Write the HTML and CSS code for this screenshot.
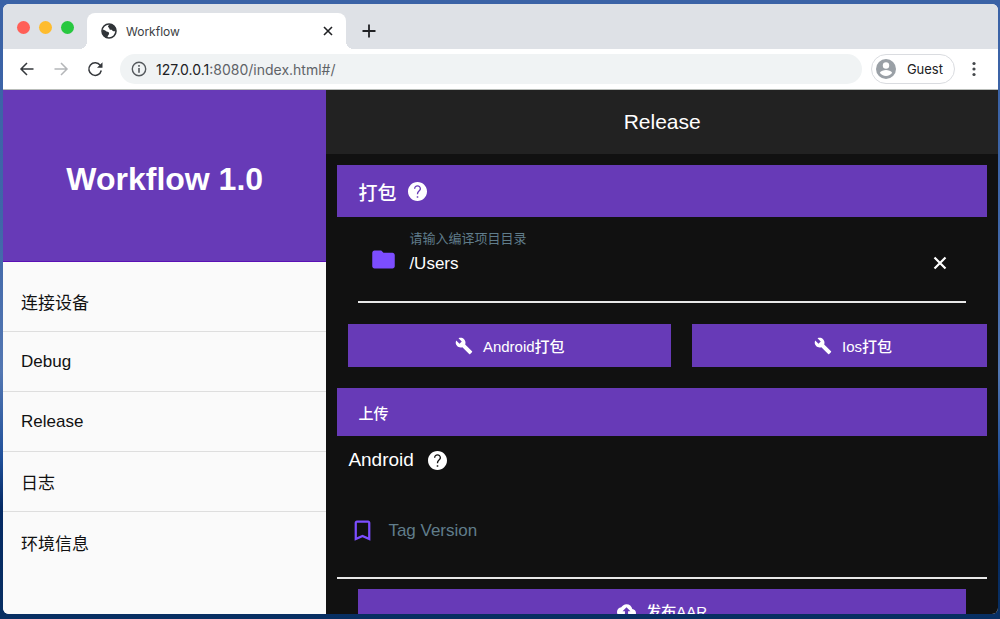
FILE: index.html
```html
<!DOCTYPE html>
<html lang="zh-CN">
<head>
<meta charset="utf-8">
<title>Workflow</title>
<link rel="stylesheet" href="styles.css">
</head>
<body>
<div class="window">
  <header class="tab-strip">
    <div class="lights">
      <button class="light light-close" aria-label="Close window"></button>
      <button class="light light-min" aria-label="Minimize window"></button>
      <button class="light light-max" aria-label="Zoom window"></button>
    </div>
    <div class="tab">
      <svg class="tab-icon" viewBox="0 0 16 16" aria-hidden="true">
        <circle cx="8" cy="8" r="7" fill="#fff" stroke="#303438" stroke-width="1.6"/>
        <path d="M1.500 6.500C3 7 4.500 7 5.500 8.500c1.500.2 2.500.5 2.600 2 .1 1.200-1.300 1.500-1.600 3.500L6 15C2.500 14 .6 11 1.500 6.500zM9 1c-.5 1.200-2 1-2 2.500 0 1 1.300.8 1.300 2 0 1.300 1.200 1.500 2.200 1.200.8 0 .8 1.500 2 1.600 1 .1 2-.3 2.500-.6C15 4 12.500 1.500 9 1z" fill="#303438"/>
      </svg>
      <span class="tab-title">Workflow</span>
      <button class="icon-button" aria-label="Close tab">
        <svg width="10" height="10" viewBox="0 0 10 10" stroke="#202124" stroke-width="1.6"><path d="M1 1l8 8M9 1l-8 8"/></svg>
      </button>
    </div>
    <button class="icon-button new-tab" aria-label="New tab">
      <svg width="14" height="14" viewBox="0 0 14 14" stroke="#202124" stroke-width="1.8"><path d="M7 .5v13M.5 7h13"/></svg>
    </button>
  </header>

  <div class="toolbar">
    <div class="nav-buttons">
      <button class="icon-button" aria-label="Back">
        <svg width="16" height="16" viewBox="0 0 16 16" fill="none" stroke="#35383c" stroke-width="1.5"><path d="M14.500 8H2M8 2L2 8l6 6"/></svg>
      </button>
      <button class="icon-button" aria-label="Forward">
        <svg width="16" height="16" viewBox="0 0 16 16" fill="none" stroke="#b4b6b9" stroke-width="1.5"><path d="M1.500 8H14M8 2l6 6-6 6"/></svg>
      </button>
      <button class="icon-button" aria-label="Reload">
        <svg width="16" height="16" viewBox="0 0 16 16" fill="none" stroke="#35383c" stroke-width="1.5"><path d="M14.300 9.500A6.300 6.300 0 1 1 13.300 4.400L14.500 6"/><path d="M15.500 1.200v5.500H10z" fill="#35383c" stroke="none"/></svg>
      </button>
    </div>
    <div class="address">
      <svg width="16" height="16" viewBox="0 0 16 16" fill="none" stroke="#55595d" stroke-width="1.400"><circle cx="8" cy="8" r="6.700"/><path d="M8 7v4.700M8 4v1.700" stroke-width="1.600"/></svg>
      <span class="url"><b class="host">127.0.0.1</b>:8080/index.html#/</span>
    </div>
    <button class="profile">
      <svg width="20" height="20" viewBox="0 0 20 20" aria-hidden="true"><circle cx="10" cy="10" r="10" fill="#9aa0a6"/><circle cx="10" cy="6.500" r="3.200" fill="#fff"/><path d="M3.800 13.800c1-2 4-2.800 6.200-2.800s5.200.8 6.200 2.800c-1.300 2-3.600 3.200-6.200 3.200s-4.900-1.200-6.200-3.200z" fill="#fff"/></svg>
      <span>Guest</span>
    </button>
    <button class="icon-button" aria-label="Menu">
      <svg width="16" height="16" viewBox="0 0 16 16" fill="#44474b"><circle cx="8" cy="2.500" r="1.600"/><circle cx="8" cy="8" r="1.600"/><circle cx="8" cy="13.500" r="1.600"/></svg>
    </button>
  </div>

  <div class="app">
    <aside class="sidebar">
      <h1 class="brand">Workflow 1.0</h1>
      <nav class="menu">
        <a class="menu-item" href="#devices">连接设备</a>
        <a class="menu-item" href="#debug">Debug</a>
        <a class="menu-item" href="#release">Release</a>
        <a class="menu-item" href="#log">日志</a>
        <a class="menu-item" href="#env">环境信息</a>
      </nav>
    </aside>

    <main class="main">
      <h2 class="app-bar">Release</h2>
      <div class="content">
        <h3 class="banner banner-large">打包
          <button class="icon-button" aria-label="打包帮助"><svg class="help" viewBox="2 2 20 20" fill="#fff"><path d="M12 2C6.480 2 2 6.480 2 12s4.480 10 10 10 10-4.480 10-10S17.520 2 12 2zm.8 16.600h-1.600v-1.700h1.600v1.700zm1.900-7.300l-.9.920C13.100 13 12.700 13.700 12.700 15h-1.400v-.5c0-1.100.4-2.100 1.100-2.830l1.240-1.260c.4-.4.66-.86.66-1.500 0-1.250-1-2.200-2.300-2.200s-2.300.95-2.300 2.300H8.300c0-2.100 1.650-3.700 3.700-3.700s3.700 1.600 3.700 3.700c0 .88-.4 1.680-1 2.290z"/></svg></button>
        </h3>

        <div class="field path-field">
          <svg width="27" height="27" viewBox="0 0 24 24" fill="#7c4dff" aria-hidden="true"><path d="M10 4H4c-1.100 0-1.990.9-1.990 2L2 18c0 1.100.9 2 2 2h16c1.100 0 2-.9 2-2V8c0-1.100-.9-2-2-2h-8l-2-2z"/></svg>
          <div class="field-body">
            <label class="field-label" for="path">请输入编译项目目录</label>
            <input class="field-input" id="path" type="text" value="/Users">
          </div>
          <button class="icon-button clear" aria-label="清除">
            <svg width="14" height="14" viewBox="0 0 14 14" stroke="#fff" stroke-width="2.200"><path d="M1.500 1.500l11 11M12.500 1.500l-11 11"/></svg>
          </button>
        </div>

        <div class="actions">
          <button class="action action-android">
            <svg width="18" height="18" viewBox="0 0 24 24" fill="#fff"><path d="M22.700 19l-9.100-9.100c.9-2.300.4-5-1.500-6.900-2-2-5-2.400-7.400-1.300L9 6 6 9 1.600 4.700C.4 7.100.9 10.100 2.900 12.100c1.900 1.900 4.600 2.400 6.900 1.500l9.100 9.100c.4.4 1 .4 1.400 0l2.300-2.300c.5-.4.5-1.100.1-1.400z"/></svg>
            <span>Android打包</span>
          </button>
          <button class="action action-ios">
            <svg width="18" height="18" viewBox="0 0 24 24" fill="#fff"><path d="M22.700 19l-9.100-9.100c.9-2.300.4-5-1.500-6.900-2-2-5-2.400-7.400-1.300L9 6 6 9 1.600 4.700C.4 7.100.9 10.100 2.900 12.100c1.900 1.900 4.600 2.400 6.900 1.500l9.100 9.100c.4.4 1 .4 1.400 0l2.300-2.300c.5-.4.5-1.100.1-1.400z"/></svg>
            <span>Ios打包</span>
          </button>
        </div>

        <h3 class="banner">上传</h3>
        <h4 class="platform">Android
          <button class="icon-button" aria-label="Android帮助"><svg class="help" viewBox="2 2 20 20" fill="#fff"><path d="M12 2C6.480 2 2 6.480 2 12s4.480 10 10 10 10-4.480 10-10S17.520 2 12 2zm.8 16.600h-1.600v-1.700h1.600v1.700zm1.900-7.300l-.9.920C13.100 13 12.700 13.700 12.700 15h-1.400v-.5c0-1.100.4-2.100 1.100-2.830l1.240-1.260c.4-.4.66-.86.66-1.500 0-1.250-1-2.200-2.300-2.200s-2.300.95-2.300 2.300H8.300c0-2.100 1.650-3.700 3.700-3.700s3.700 1.600 3.700 3.700c0 .88-.4 1.680-1 2.290z"/></svg></button>
        </h4>

        <div class="field tag-field">
          <svg width="27" height="27" viewBox="0 0 24 24" fill="#7c4dff" aria-hidden="true"><path d="M17 3H7c-1.100 0-1.990.9-1.990 2L5 21l7-3 7 3V5c0-1.100-.9-2-2-2zm0 15l-5-2.180L7 18V5h10v13z"/></svg>
          <input class="field-input" type="text" placeholder="Tag Version" aria-label="Tag Version">
        </div>

        <button class="action publish">
          <svg width="19" height="19" viewBox="0 0 24 24" fill="#fff"><path d="M19.350 10.040C18.670 6.590 15.640 4 12 4 9.110 4 6.600 5.640 5.350 8.040 2.340 8.360 0 10.910 0 14c0 3.310 2.690 6 6 6h13c2.760 0 5-2.240 5-5 0-2.640-2.050-4.780-4.650-4.960zM14 13v4h-4v-4H7l5-5 5 5h-3z"/></svg>
          <span>发布AAR</span>
        </button>
      </div>
    </main>
  </div>
</div>
</body>
</html>
```
FILE: styles.css
```css
* {
  box-sizing: border-box;
}

body {
  margin: 0;
  height: 100vh;
  padding: 4px 2px 5px 3px;
  overflow: hidden;
  font-family: "Liberation Sans", "Noto Sans CJK SC", sans-serif;
  background: linear-gradient(#3a62a6 0%, #3f66a8 35%, #5377b2 60%, #20509a 74%, #052a64 82%, #082f62 100%);
}

button,
input {
  font: inherit;
  color: inherit;
  border: 0;
  padding: 0;
  background: none;
}

svg {
  display: block;
  flex: none;
}

h1, h2, h3, h4 {
  margin: 0;
  font-weight: 400;
}

.window {
  height: 100%;
  display: flex;
  flex-direction: column;
  border-radius: 6px;
  overflow: hidden;
  background: #fff;
}

.icon-button {
  display: flex;
  flex: none;
}

/* Browser chrome */
.tab-strip {
  flex: none;
  display: flex;
  height: 45px;
  padding-top: 9px;
  background: #dee1e6;
  font-family: Inter, "Liberation Sans", sans-serif;
}

.lights {
  display: flex;
  gap: 9px;
  padding: 8px 13px 0 14px;
}

.light {
  width: 13px;
  height: 13px;
  border-radius: 50%;
}

.light-close { background: #ff5f57; }
.light-min { background: #febc2e; }
.light-max { background: #28c840; }

.tab {
  position: relative;
  display: flex;
  align-items: center;
  width: 259px;
  padding: 0 13px 0 14px;
  border-radius: 8px 8px 0 0;
  background: #fff;
}

.tab::before,
.tab::after {
  content: "";
  position: absolute;
  bottom: 0;
  width: 8px;
  height: 8px;
}

.tab::before {
  right: 100%;
  background: radial-gradient(circle at 0 0, transparent 8px, #fff 8px);
}

.tab::after {
  left: 100%;
  background: radial-gradient(circle at 100% 0, transparent 8px, #fff 8px);
}

.tab-icon {
  width: 16px;
  height: 16px;
}

.tab-title {
  flex: 1;
  padding-left: 9px;
  font-size: 12px;
  color: #3c4043;
}

.new-tab {
  align-self: center;
  margin-left: 16px;
}

.toolbar {
  flex: none;
  display: flex;
  align-items: center;
  height: 41px;
  padding: 0 16px;
  border-bottom: 1px solid #b9bdb9;
  font-family: Inter, "Liberation Sans", sans-serif;
}

.nav-buttons {
  display: flex;
  gap: 18px;
}

.address {
  flex: 1;
  display: flex;
  align-items: center;
  gap: 9px;
  height: 30px;
  margin: 0 9px 0 17px;
  padding: 0 11px;
  border-radius: 15px;
  background: #f0f3f4;
}

.url {
  font-size: 14px;
  color: #5f6368;
}

.host {
  font-weight: 400;
  color: #202124;
}

.profile {
  display: flex;
  align-items: center;
  gap: 11px;
  height: 30px;
  margin-right: 11px;
  padding: 0 11px 0 4px;
  border: 1px solid #dadce0;
  border-radius: 15px;
  font-size: 13px;
  color: #202124;
}

/* Application */
.app {
  flex: 1;
  min-height: 0;
  display: grid;
  grid-template-columns: 32.5% 1fr;
}

.sidebar {
  background: #fafafa;
}

.brand {
  display: flex;
  align-items: center;
  justify-content: center;
  height: 172px;
  padding-top: 8px;
  border-bottom: 1px solid #5a0fb5;
  background: #673ab7;
  color: #fff;
  font-size: 32px;
  font-weight: 700;
}

.menu {
  display: flex;
  flex-direction: column;
  padding-top: 10px;
}

.menu-item {
  display: flex;
  align-items: center;
  height: 60px;
  padding-left: 18px;
  border-bottom: 1px solid #dedede;
  color: #111;
  font-size: 17px;
  text-decoration: none;
}

.menu-item:last-child {
  border-bottom: 0;
}

.main {
  min-width: 0;
  min-height: 0;
  overflow: hidden;
  background: #111;
  color: #fff;
}

.app-bar {
  display: flex;
  align-items: center;
  justify-content: center;
  height: 64px;
  background: #222;
  font-size: 21px;
}

.content {
  display: flex;
  flex-direction: column;
  padding: 11px 11px 0;
}

.banner {
  display: flex;
  align-items: center;
  gap: 12px;
  height: 48px;
  padding-left: 21px;
  background: #673ab7;
  font-size: 15px;
  font-weight: 500;
}

.banner-large {
  height: 52px;
  font-size: 19px;
}

.help {
  width: 19px;
  height: 19px;
}

.field {
  display: flex;
  align-items: center;
  border-bottom: 2px solid #e8e8e8;
}

.path-field {
  height: 86px;
  margin: 0 21px;
  padding-left: 12px;
  gap: 12px;
}

.field-body {
  flex: 1;
  display: flex;
  flex-direction: column;
  gap: 4px;
  padding-bottom: 12px;
}

.field-label {
  font-size: 13px;
  line-height: 18px;
  color: #607d8b;
}

.field-input {
  flex: 1;
  min-width: 0;
  font-size: 17px;
  line-height: 24px;
}

.field-input::placeholder {
  color: #607d8b;
  opacity: 1;
}

.clear {
  margin: 8px 19px 0 0;
}

.actions {
  display: grid;
  grid-template-columns: 323fr 295fr;
  gap: 21px;
  padding: 21px 0 21px 11px;
}

.action {
  display: flex;
  align-items: center;
  justify-content: center;
  gap: 10px;
  height: 43px;
  background: #673ab7;
  font-size: 15px;
  font-weight: 500;
}

.action-ios {
  padding-left: 27px;
}

.platform {
  display: flex;
  align-items: center;
  gap: 14px;
  height: 48px;
  padding-left: 11px;
  font-size: 19px;
}

.tag-field {
  height: 95px;
  padding-left: 12px;
  gap: 12px;
}

.publish {
  margin: 10px 21px 0;
}
```
